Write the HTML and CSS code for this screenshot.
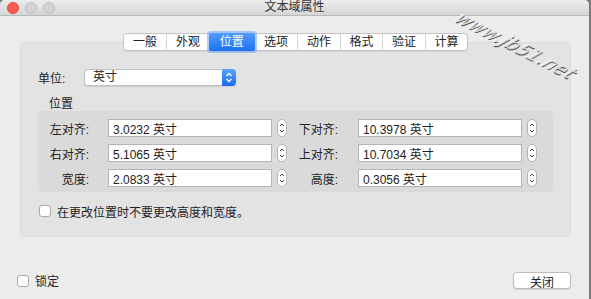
FILE: index.html
```html
<!DOCTYPE html>
<html lang="zh-CN">
<head>
<meta charset="UTF-8">
<meta name="viewport" content="width=device-width, initial-scale=1.0">
<title>文本域属性</title>
<link rel="stylesheet" href="styles.css">
</head>
<body>

<div class="window">
    <div class="titlebar">
        <div class="lights">
            <span class="light light-close"></span>
            <span class="light"></span>
            <span class="light"></span>
        </div>
        <div class="title">文本域属性</div>
        <div></div>
    </div>

    <div class="content">
        <div class="tabs">
            <span class="tab">一般</span>
            <span class="tab">外观</span>
            <span class="tab tab-active">位置</span>
            <span class="tab">选项</span>
            <span class="tab">动作</span>
            <span class="tab">格式</span>
            <span class="tab">验证</span>
            <span class="tab">计算</span>
        </div>

        <div class="panel">
            <div class="unit-row">
                <span class="unit-label">单位:</span>
                <div class="popup">
                    <span class="popup-text">英寸</span>
                    <span class="popup-arrow">
                        <svg width="14" height="17" viewBox="0 0 14 17"><path d="M4.5 7 L7 4.5 L9.5 7 M4.5 10 L7 12.5 L9.5 10" fill="none" stroke="#fff" stroke-width="1.3"/></svg>
                    </span>
                </div>
            </div>

            <div class="section-title">位置</div>
            <div class="group">
                <div class="field-row">
                    <span class="field-label">左对齐:</span>
                    <input class="field-input" type="text" value="3.0232 英寸">
                    <span class="stepper"><svg width="10" height="18" viewBox="0 0 10 18"><rect x="0.5" y="0.5" width="9" height="17" rx="4.5" fill="#fff" stroke="#b3b3b3"/><path d="M3 7 L5 5 L7 7 M3 11 L5 13 L7 11" fill="none" stroke="#444" stroke-width="1"/></svg></span>
                    <span class="field-label field-label-right">下对齐:</span>
                    <input class="field-input" type="text" value="10.3978 英寸">
                    <span class="stepper"><svg width="10" height="18" viewBox="0 0 10 18"><rect x="0.5" y="0.5" width="9" height="17" rx="4.5" fill="#fff" stroke="#b3b3b3"/><path d="M3 7 L5 5 L7 7 M3 11 L5 13 L7 11" fill="none" stroke="#444" stroke-width="1"/></svg></span>
                </div>
                <div class="field-row">
                    <span class="field-label">右对齐:</span>
                    <input class="field-input" type="text" value="5.1065 英寸">
                    <span class="stepper"><svg width="10" height="18" viewBox="0 0 10 18"><rect x="0.5" y="0.5" width="9" height="17" rx="4.5" fill="#fff" stroke="#b3b3b3"/><path d="M3 7 L5 5 L7 7 M3 11 L5 13 L7 11" fill="none" stroke="#444" stroke-width="1"/></svg></span>
                    <span class="field-label field-label-right">上对齐:</span>
                    <input class="field-input" type="text" value="10.7034 英寸">
                    <span class="stepper"><svg width="10" height="18" viewBox="0 0 10 18"><rect x="0.5" y="0.5" width="9" height="17" rx="4.5" fill="#fff" stroke="#b3b3b3"/><path d="M3 7 L5 5 L7 7 M3 11 L5 13 L7 11" fill="none" stroke="#444" stroke-width="1"/></svg></span>
                </div>
                <div class="field-row">
                    <span class="field-label">宽度:</span>
                    <input class="field-input" type="text" value="2.0833 英寸">
                    <span class="stepper"><svg width="10" height="18" viewBox="0 0 10 18"><rect x="0.5" y="0.5" width="9" height="17" rx="4.5" fill="#fff" stroke="#b3b3b3"/><path d="M3 7 L5 5 L7 7 M3 11 L5 13 L7 11" fill="none" stroke="#444" stroke-width="1"/></svg></span>
                    <span class="field-label field-label-right">高度:</span>
                    <input class="field-input" type="text" value="0.3056 英寸">
                    <span class="stepper"><svg width="10" height="18" viewBox="0 0 10 18"><rect x="0.5" y="0.5" width="9" height="17" rx="4.5" fill="#fff" stroke="#b3b3b3"/><path d="M3 7 L5 5 L7 7 M3 11 L5 13 L7 11" fill="none" stroke="#444" stroke-width="1"/></svg></span>
                </div>
            </div>

            <label class="check-row">
                <span class="checkbox"></span>
                <span>在更改位置时不要更改高度和宽度。</span>
            </label>
        </div>

        <div class="footer">
            <label class="check-row check-row-footer">
                <span class="checkbox"></span>
                <span>锁定</span>
            </label>
            <button class="close-button">关闭</button>
        </div>
    </div>

    <span class="watermark">www.jb51.net</span>
</div>

</body>
</html>
```

FILE: styles.css
```css
body {
    margin: 0;
    padding: 0;
    width: 591px;
    height: 299px;
    overflow: hidden;
    background-color: #7b7b7b;
    font-family: "Liberation Sans", "Noto Sans CJK SC", sans-serif;
    font-size: 12px;
    color: #222;
}
.window {
    position: relative;
    width: 589px;
    height: 299px;
    background-color: #ececec;
    border-radius: 5px 5px 0 0;
    overflow: hidden;
}
.titlebar {
    height: 15px;
    display: grid;
    grid-template-columns: 1fr auto 1fr;
    align-items: center;
    background: linear-gradient(#ececec, #d6d6d6);
    border-bottom: 1px solid #b8b8b8;
}
.lights {
    display: flex;
    gap: 6px;
    padding-left: 7px;
}
.light {
    width: 10px;
    height: 10px;
    border-radius: 50%;
    background-color: #d3d3d3;
    border: 1px solid #bdbdbd;
}
.light-close {
    background-color: #fc5b55;
    border-color: #e2463f;
}
.title {
    font-size: 12px;
    line-height: 15px;
    color: #333;
}
.content {
    padding: 17px 18px 0 20px;
}
.tabs {
    position: relative;
    z-index: 1;
    display: flex;
    justify-content: center;
    width: max-content;
    margin: 0 auto;
    background-color: #fff;
    border: 1px solid #c4c4c4;
    border-radius: 4px;
    height: 16px;
    box-shadow: 0 1px 1px rgba(0, 0, 0, 0.08);
}
.tab {
    width: 42.5px;
    text-align: center;
    line-height: 16px;
    border-left: 1px solid #d3d3d3;
    box-sizing: border-box;
}
.tab:first-child {
    border-left: none;
}
.tab-active {
    width: 46px;
    color: #fff;
    background: linear-gradient(#4f9cfb, #1f71f2);
    border-left: none;
    margin: -1px 0;
    line-height: 18px;
    box-shadow: 0 0 0 2px rgba(110, 165, 245, 0.55);
    border-radius: 2px;
}
.tab-active + .tab {
    border-left: none;
}
.panel {
    margin-top: -9px;
    padding: 26px 17px 18px 17px;
    background-color: #e3e3e3;
    border: 1px solid #dadada;
    border-radius: 5px;
    box-sizing: border-box;
    height: 195px;
}
.unit-row {
    display: flex;
    align-items: center;
    height: 17px;
}
.unit-label {
    width: 46px;
}
.popup {
    display: flex;
    width: 152px;
    height: 17px;
    box-sizing: border-box;
    background-color: #fff;
    border: 1px solid #c2c2c2;
    border-right: none;
    border-radius: 4px;
    box-shadow: 0 1px 1px rgba(0, 0, 0, 0.1);
}
.popup-text {
    flex: 1;
    padding-left: 8px;
    line-height: 15px;
}
.popup-arrow {
    display: flex;
    margin: -1px 0;
    width: 14px;
    height: 17px;
    background: linear-gradient(#5aa5fc, #1b6cf2);
    border-radius: 0 4px 4px 0;
}
.section-title {
    margin: 12px 0 0 11px;
    height: 13px;
    line-height: 13px;
}
.group {
    display: flex;
    flex-direction: column;
    gap: 7px;
    padding: 8px 0 5px 0;
    background-color: #dadada;
    border-radius: 4px;
}
.field-row {
    display: flex;
    align-items: center;
    height: 18px;
}
.field-label {
    width: 51px;
    text-align: right;
    margin-right: 19px;
}
.field-label-right {
    margin-right: 20px;
}
.field-input {
    width: 164px;
    height: 18px;
    box-sizing: border-box;
    border: 1px solid #b5b5b5;
    padding: 0 0 0 4px;
    margin: 0;
    font-family: "Liberation Sans", "Noto Sans CJK SC", sans-serif;
    font-size: 12px;
    color: #222;
    background-color: #fff;
    outline: none;
}
.stepper {
    display: flex;
    margin-left: 5px;
}
.check-row {
    display: flex;
    align-items: center;
    gap: 6px;
    margin-top: 13px;
    margin-left: 1px;
    height: 12px;
}
.checkbox {
    width: 10px;
    height: 10px;
    background-color: #fff;
    border: 1px solid #a9a9a9;
    border-radius: 3px;
}
.footer {
    display: flex;
    justify-content: space-between;
    align-items: center;
    margin: 35px 0 0 -3px;
    height: 17px;
}
.check-row-footer {
    margin: 0;
}
.close-button {
    width: 58px;
    height: 17px;
    padding: 0;
    background-color: #fff;
    border: 1px solid #bdbdbd;
    border-radius: 4px;
    font-family: "Liberation Sans", "Noto Sans CJK SC", sans-serif;
    font-size: 12px;
    color: #222;
    box-shadow: 0 1px 1px rgba(0, 0, 0, 0.12);
}
.watermark {
    position: absolute;
    left: 452px;
    top: 35px;
    white-space: nowrap;
    font-family: "DejaVu Sans", sans-serif;
    font-size: 18px;
    font-style: italic;
    letter-spacing: 0.5px;
    color: #d8d8d8;
    text-shadow: 1px 1px 0 #555, -1px 0 0 #fff;
    transform: rotate(27deg) skewX(-25deg);
}
```
